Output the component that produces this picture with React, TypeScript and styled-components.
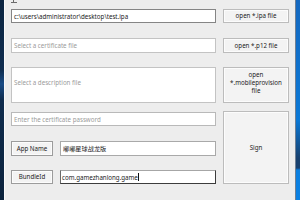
import styled, { createGlobalStyle } from "styled-components"

const GlobalStyle = createGlobalStyle`
  html, body {
    margin: 0;
    padding: 0;
    width: 300px;
    height: 200px;
    overflow: hidden;
    background: #0d2540;
  }
  body {
    font-family: "Noto Sans", "Noto Sans CJK SC", sans-serif;
  }
`

const Desktop = styled.div`
  display: flex;
  width: 300px;
  height: 200px;
`

const LeftStrip = styled.div`
  width: 4px;
  background: linear-gradient(
    180deg,
    #0c2541 0%,
    #0f2d4f 35%,
    #1a4c86 42%,
    #0f2c4d 50%,
    #0b223c 100%
  );
`

const RightStrip = styled.div`
  width: 4px;
  border-left: 1px solid #6f7f92;
  background: linear-gradient(
    180deg,
    #1468c0 0%,
    #0a78d6 60%,
    #17406e 79%,
    #17406e 84%,
    #0b7fe0 85%,
    #0a80e2 100%
  );
`

const Window = styled.div`
  flex: 1;
  display: flex;
  flex-direction: column;
  background: #ededed;
  border-left: 1px solid #fafafa;
`

const TitleEdge = styled.div`
  height: 3px;
  padding-left: 6px;
  display: flex;
  align-items: flex-start;
`

const Form = styled.div`
  display: flex;
  gap: 7px;
  padding: 6px 0 0 6px;
`

const Column = styled.div<{ $w: number }>`
  display: flex;
  flex-direction: column;
  width: ${(p) => p.$w}px;
`

const Field = styled.div<{ $h: number; $mt?: number; $border?: string; $muted?: boolean; $lift?: boolean }>`
  box-sizing: border-box;
  display: flex;
  align-items: center;
  height: ${(p) => p.$h}px;
  margin-top: ${(p) => p.$mt ?? 0}px;
  padding: 0 2px ${(p) => (p.$lift ? 5 : 0)}px 2px;
  background: #ffffff;
  border: 1px solid ${(p) => p.$border ?? "#b9b9b9"};
  color: ${(p) => (p.$muted ? "#9b9b9b" : "#1b1b1b")};
  font-size: 6.2px;
  white-space: nowrap;
  overflow: hidden;
`

const FocusField = styled(Field)`
  border-color: #a6a6a6 #3c3c3c #3c3c3c #6a6a6a;
  padding-left: 1px;
`

const Button = styled.div<{ $h: number; $mt?: number; $dark?: boolean; $lift?: boolean }>`
  box-sizing: border-box;
  display: flex;
  align-items: center;
  justify-content: center;
  text-align: center;
  height: ${(p) => p.$h}px;
  margin-top: ${(p) => p.$mt ?? 0}px;
  padding-bottom: ${(p) => (p.$lift ? 4 : 0)}px;
  background: #f3f3f3;
  border: 1px solid ${(p) => (p.$dark ? "#9c9c9c" : "#bcbcbc")};
  box-shadow: inset 0 0 0 1px #fcfcfc;
  color: #1b1b1b;
  font-size: 6.2px;
  line-height: 8px;
  white-space: nowrap;
`

const LabelRow = styled.div<{ $h: number; $mt: number }>`
  display: flex;
  gap: 7px;
  height: ${(p) => p.$h}px;
  margin-top: ${(p) => p.$mt}px;
`

const Caret = styled.span`
  display: inline-block;
  width: 1px;
  height: 8px;
  background: #111;
`

const App = () => {
  return (
    <>
      <GlobalStyle />
      <Desktop>
        <LeftStrip />
        <Window>
          <TitleEdge>
            <svg width="6" height="3" viewBox="0 0 6 3">
              <path d="M0 2.5H6M2.5 0V2" stroke="#6b6b6b" strokeWidth="1" fill="none" />
            </svg>
          </TitleEdge>
          <Form>
            <Column $w={205}>
              <Field $h={14} $border="#858585">
                c:\users\administrator\desktop\test.ipa
              </Field>
              <Field $h={15} $mt={15} $muted $border="#c3c3c3">
                Select a certificate file
              </Field>
              <Field $h={36} $mt={14} $muted $lift $border="#c3c3c3">
                Select a description file
              </Field>
              <Field $h={14} $mt={9} $muted>
                Enter the certificate password
              </Field>
              <LabelRow $h={15} $mt={15}>
                <Button $h={15} $dark style={{ width: 42 }}>
                  App Name
                </Button>
                <Field $h={15} $border="#a9a9a9" style={{ flex: 1 }}>
                  嘟嘟星球战龙版
                </Field>
              </LabelRow>
              <LabelRow $h={14} $mt={14}>
                <Button $h={14} $dark style={{ width: 42 }}>
                  BundleId
                </Button>
                <FocusField $h={14} style={{ flex: 1 }}>
                  com.gamezhanlong.game
                  <Caret />
                </FocusField>
              </LabelRow>
            </Column>
            <Column $w={66}>
              <Button $h={14}>open *.ipa file</Button>
              <Button $h={15} $mt={15}>
                open *.p12 file
              </Button>
              <Button $h={36} $mt={14} $lift>
                open
                <br />
                *.mobileprovision
                <br />
                file
              </Button>
              <Button $h={73} $mt={8}>
                Sign
              </Button>
            </Column>
          </Form>
        </Window>
        <RightStrip />
      </Desktop>
    </>
  )
}

export default App
